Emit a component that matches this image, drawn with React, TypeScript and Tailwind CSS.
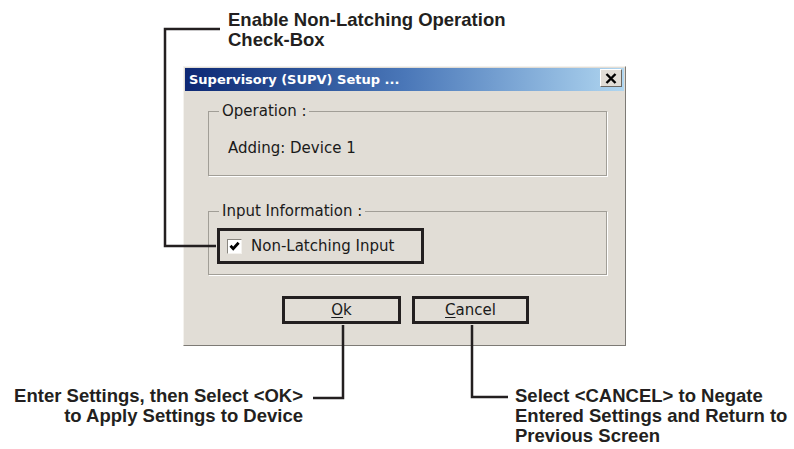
import React from "react";

const ink = "#231f20";

function CheckBox() {
  return (
    <div className="w-[15px] h-[15px] bg-white border border-[#8a8780] border-r-[#f4f2ee] border-b-[#f4f2ee] flex items-center justify-center">
      <svg width="11" height="11" viewBox="0 0 11 11">
        <path d="M1.5 4.8 L4.2 7.6 L9.6 1.8" fill="none" stroke="#000" strokeWidth="2.8" />
      </svg>
    </div>
  );
}

function DialogButton({ first, rest, width }: { first: string; rest: string; width: string }) {
  return (
    <div className={`${width} h-[28px] border-[3px] border-[#231f20] bg-[#e1ddd6] flex items-center justify-center text-[15px] text-[#1a1a1a]`}>
      <span>
        <span className="underline underline-offset-2">{first}</span>
        {rest}
      </span>
    </div>
  );
}

export default function App() {
  return (
    <div className="relative w-[794px] h-[449px] bg-white overflow-hidden font-['Liberation_Sans',Arial,sans-serif]">
      {/* top callout */}
      <div className="pl-[228px] pt-[10px] text-[18.5px] leading-[20px] font-bold text-[#231f20]">
        <div>Enable Non-Latching Operation</div>
        <div>Check-Box</div>
      </div>

      {/* dialog */}
      <div className="ml-[183px] mt-[16px] w-[443px] h-[280px] bg-[#e1ddd6] border border-[#f4f2ee] border-r-[#7d7a75] border-b-[#7d7a75] p-[1px] flex flex-col font-['DejaVu_Sans',Verdana,sans-serif]">
        <div className="h-[23px] flex justify-between bg-gradient-to-r from-[#0e2874] via-[#4a77b8] to-[#b0d6f0] pl-[4px] pr-[2px]">
          <span className="self-center text-white font-bold text-[13px] leading-none">Supervisory (SUPV) Setup ...</span>
          <div className="mt-[1px] w-[22px] h-[18px] bg-[#e1ddd6] border border-white border-r-[#6b6863] border-b-[#6b6863] flex items-center justify-center">
            <svg width="12" height="11" viewBox="0 0 12 11">
              <path d="M1.5 1 L10.5 10 M10.5 1 L1.5 10" stroke="#000" strokeWidth="2.4" />
            </svg>
          </div>
        </div>

        <div className="flex flex-col pl-[23px] pr-[17px] pt-[12px] text-[15px] text-[#1a1a1a]">
          <fieldset className="border border-[#a19e97] shadow-[1px_1px_0_#ffffff] pl-[8px] pb-[19px]">
            <legend className="ml-[2px] px-[3px] leading-[16px]">Operation :</legend>
            <div className="ml-[11px] mt-[21px] leading-[16px]">Adding: Device 1</div>
          </fieldset>

          <fieldset className="mt-[27px] border border-[#a19e97] shadow-[1px_1px_0_#ffffff] pl-[8px] pb-[10px]">
            <legend className="ml-[2px] px-[3px] leading-[16px]">Input Information :</legend>
            <div className="mt-[9px] w-[207px] h-[36px] border-[3px] border-[#231f20] flex items-center pl-[7px] gap-[9px]">
              <CheckBox />
              <span className="leading-[16px]">Non-Latching Input</span>
            </div>
          </fieldset>

          <div className="mt-[21px] ml-[74px] flex gap-[11px]">
            <DialogButton first="O" rest="k" width="w-[119px]" />
            <DialogButton first="C" rest="ancel" width="w-[117px]" />
          </div>
        </div>
      </div>

      {/* bottom callouts */}
      <div className="mt-[40px] flex text-[18.5px] leading-[20px] font-bold text-[#231f20]">
        <div className="w-[303px] text-right">
          <div>Enter Settings, then Select &lt;OK&gt;</div>
          <div>to Apply Settings to Device</div>
        </div>
        <div className="ml-[212px]">
          <div>Select &lt;CANCEL&gt; to Negate</div>
          <div>Entered Settings and Return to</div>
          <div>Previous Screen</div>
        </div>
      </div>

      {/* leader lines */}
      <svg className="absolute inset-0 pointer-events-none" width="794" height="449">
        <polyline points="220,29 165,29 165,246 216,246" fill="none" stroke={ink} strokeWidth="2.5" />
        <polyline points="343,325 343,398 313,398" fill="none" stroke={ink} strokeWidth="2.5" />
        <polyline points="472,325 472,397 508,397" fill="none" stroke={ink} strokeWidth="2.5" />
      </svg>
    </div>
  );
}
